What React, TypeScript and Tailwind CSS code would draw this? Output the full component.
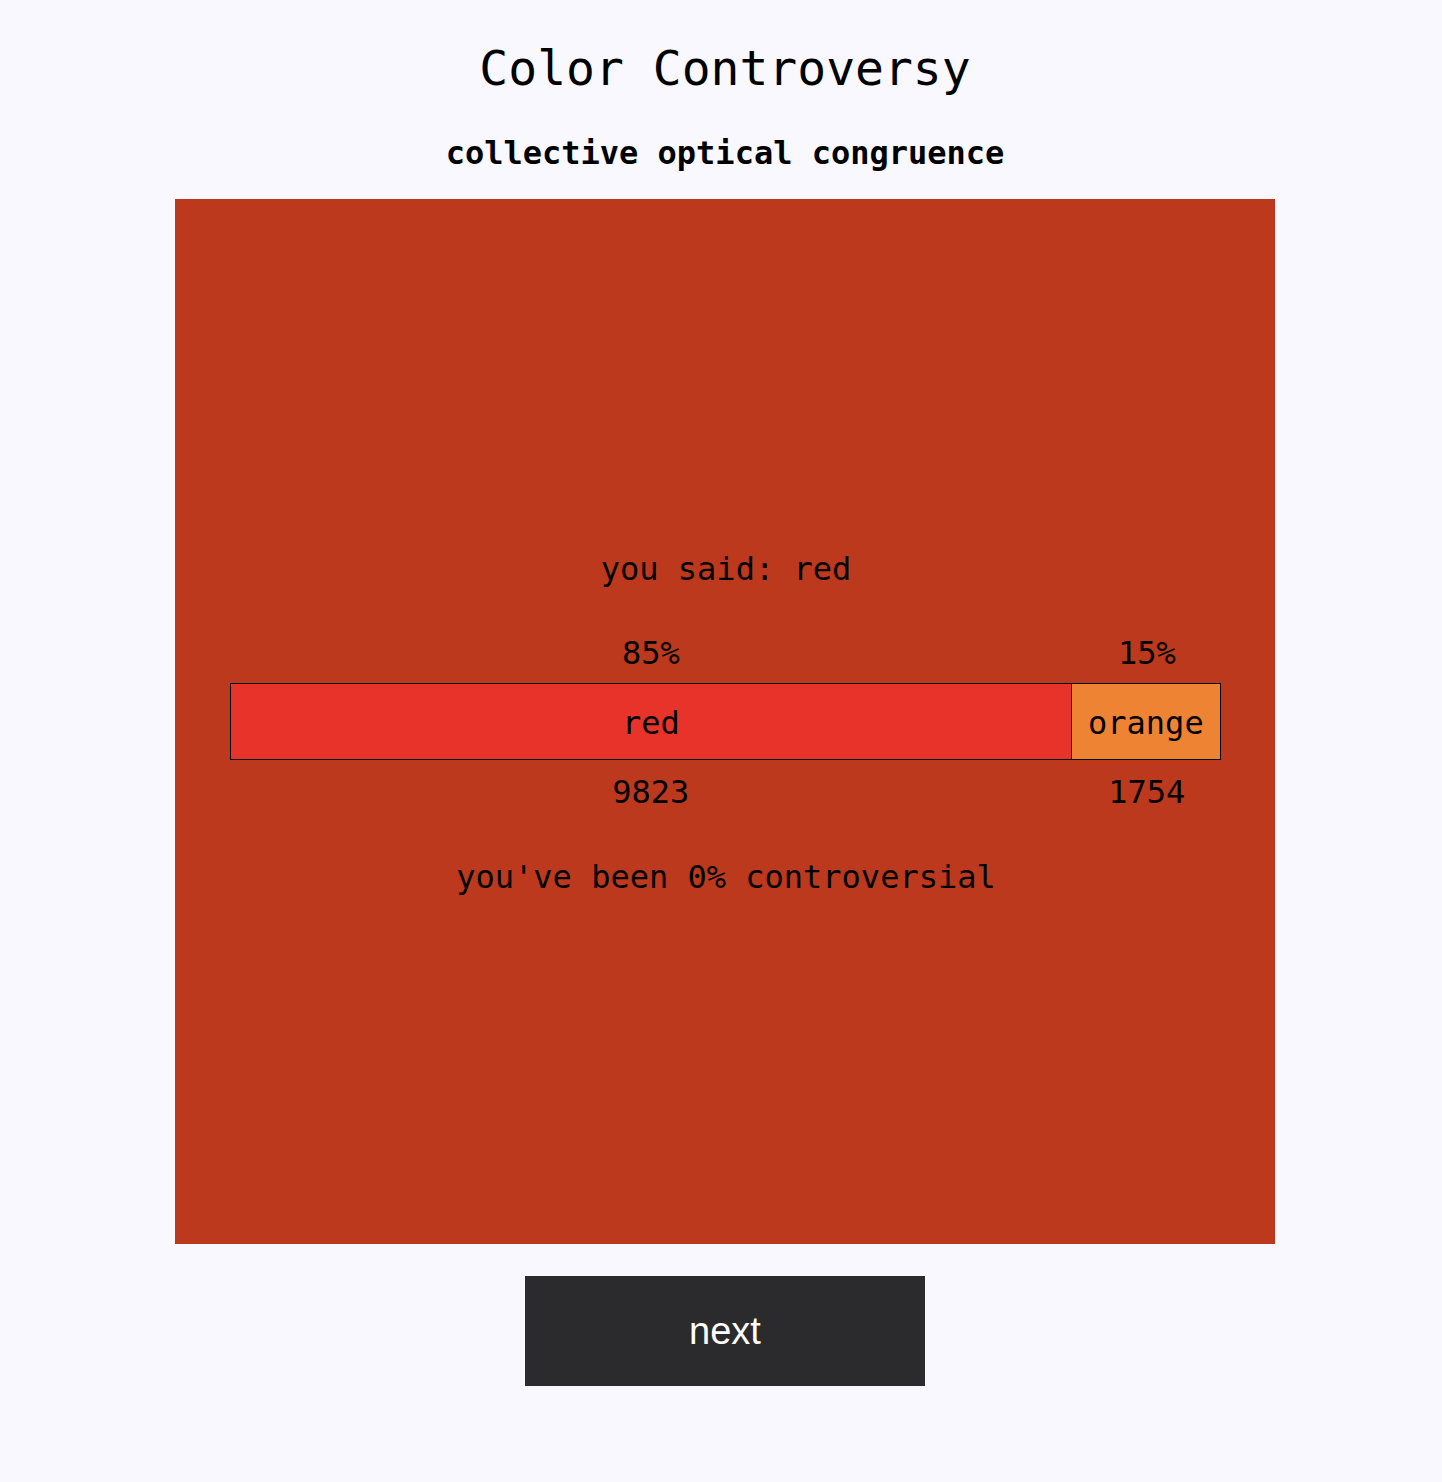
import React from "react";

type Choice = {
  name: string;
  votes: number;
  color: string;
};

const choices: Choice[] = [
  { name: "red", votes: 9823, color: "#e8332a" },
  { name: "orange", votes: 1754, color: "#ee8433" },
];

const mono = { fontFamily: '"DejaVu Sans Mono", "Liberation Mono", monospace' };

export default function App() {
  const total = choices.reduce((s, c) => s + c.votes, 0);

  return (
    <div
      className="min-h-[1482px] w-full bg-[#f8f8fe] text-black flex flex-col items-center pt-[40px] pb-[96px] pl-[8px]"
      style={mono}
    >
      <h1 className="text-[48px] leading-[56px] font-normal">Color Controversy</h1>
      <h2 className="mt-[38px] text-[32px] leading-[38px] font-bold">
        collective optical congruence
      </h2>

      {/* panel */}
      <div className="mt-[27px] w-[1100px] h-[1045px] bg-[#bc391d] flex flex-col items-center justify-center pl-[55px] pr-[53px] pt-[2px]">
        <div className="text-[32px] leading-[38px]">you said: red</div>

        <div className="mt-[46px] w-full flex">
          {choices.map((c) => (
            <div
              key={c.name}
              className="text-center text-[32px] leading-[38px]"
              style={{ width: `${(c.votes / total) * 100}%` }}
            >
              {Math.round((c.votes / total) * 100)}%
            </div>
          ))}
        </div>

        <div className="mt-[11px] w-full h-[77px] flex">
          {choices.map((c) => (
            <div
              key={c.name}
              className="h-full border border-black flex items-center justify-center pt-[3px] text-[32px] leading-[38px] -ml-px first:ml-0"
              style={{ width: `${(c.votes / total) * 100}%`, backgroundColor: c.color }}
            >
              {c.name}
            </div>
          ))}
        </div>

        <div className="mt-[13px] w-full flex">
          {choices.map((c) => (
            <div
              key={c.name}
              className="text-center text-[32px] leading-[38px]"
              style={{ width: `${(c.votes / total) * 100}%` }}
            >
              {c.votes}
            </div>
          ))}
        </div>

        <div className="mt-[47px] text-[32px] leading-[38px]">
          you've been 0% controversial
        </div>
      </div>

      <button
        className="mt-[32px] w-[400px] h-[110px] bg-[#2b2a2c] text-white text-[38px]"
        style={{ fontFamily: '"Liberation Sans", Arial, sans-serif' }}
      >
        next
      </button>
    </div>
  );
}
